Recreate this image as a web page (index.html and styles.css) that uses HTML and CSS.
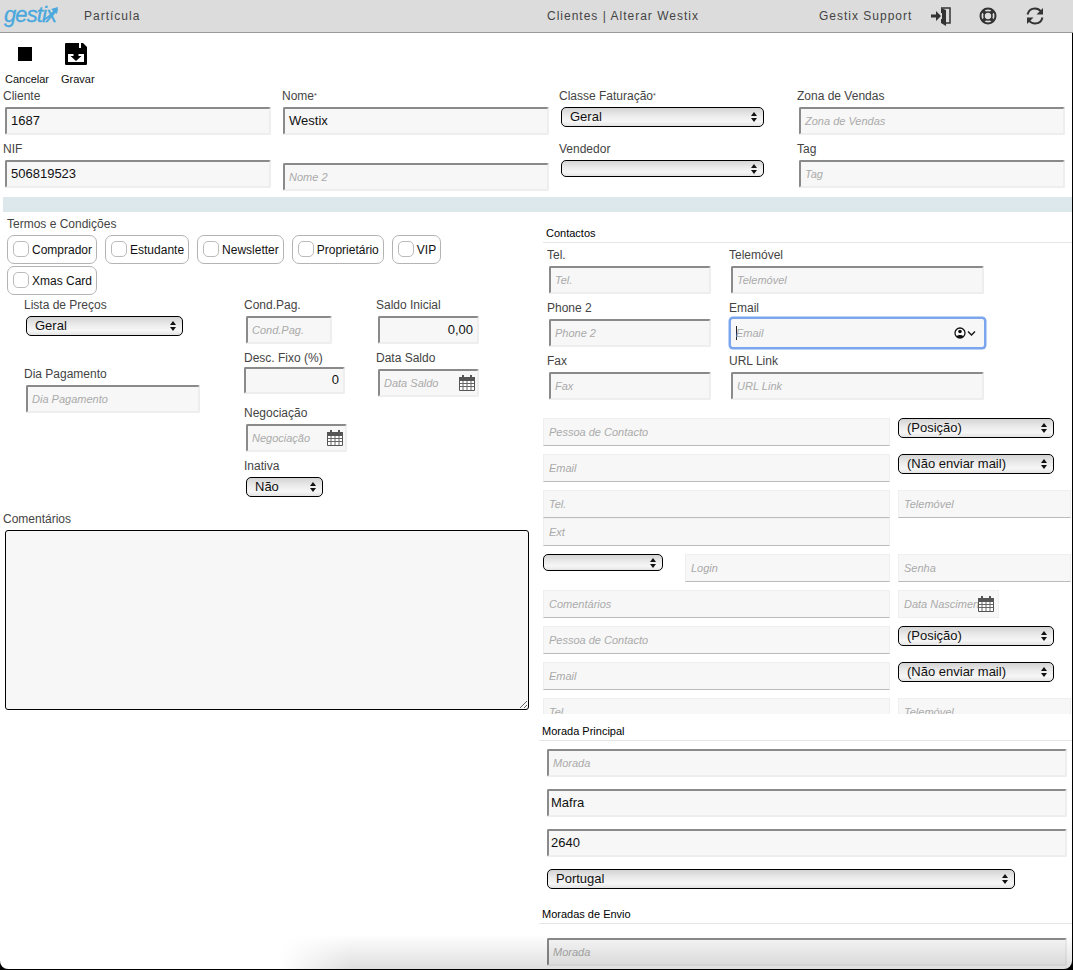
FILE: index.html
```html
<!DOCTYPE html>
<html lang="pt">
<head>
    <meta charset="UTF-8">
    <meta name="viewport" content="width=device-width, initial-scale=1.0">
    <link rel="stylesheet" href="styles.css">
    <title>Clientes | Alterar Westix</title>
</head>
<body>
    <svg class="defs" width="0" height="0">
        <symbol id="cal" viewBox="0 0 16 16">
            <path fill="#555" d="M0 2h16v4H0zM3 0h2v3H3zM11 0h2v3h-2z"/>
            <path fill="#fff" stroke="#555" d="M.5 5.5h15v10H.5z"/>
            <path stroke="#666" stroke-width="1" fill="none" d="M4 6v9M8 6v9M12 6v9M1 8.5h14M1 11.5h14"/>
        </symbol>
    </svg>

    <header class="topbar">
        <div class="brand">
            <span class="logo">gestix</span>
            <svg class="logo-arrow" width="20" height="16" viewBox="0 0 20 16">
                <path fill="none" stroke="#4aa8dc" stroke-width="2" d="M3 14C8 12 12 8 16 3"/>
                <path fill="#4aa8dc" d="M11 3l7-2-1 7z"/>
            </svg>
        </div>
        <div class="top-module">Partícula</div>
        <div class="top-crumb">Clientes | Alterar Westix</div>
        <div class="top-support">Gestix Support</div>
        <svg class="top-icon" width="20" height="20" viewBox="0 0 20 20">
            <path fill="#333" d="M0 8.500h5V5l5 5-5 5v-3.500H0z"/>
            <path fill="none" stroke="#333" stroke-width="1.500" d="M10 2h9v15h-5"/>
            <path fill="#333" d="M10 2l5 2v16l-5-3v-4h1V7h-1z"/>
        </svg>
        <svg class="top-icon buoy" width="20" height="20" viewBox="0 0 20 20">
            <circle cx="10" cy="10" r="7.500" fill="none" stroke="#333" stroke-width="2"/>
            <circle cx="10" cy="10" r="4" fill="none" stroke="#333" stroke-width="1.600"/>
            <path stroke="#333" stroke-width="3.200" d="M4.500 4.500l3 3M15.500 4.500l-3 3M4.500 15.500l3-3M15.500 15.500l-3-3"/>
        </svg>
        <svg class="top-icon sync" width="20" height="20" viewBox="0 0 20 20">
            <path fill="none" stroke="#333" stroke-width="2" d="M2.500 8.500C3.500 4.500 6.500 2.500 10 2.500c2.500 0 4.500 1 6 3"/>
            <path fill="#333" d="M18 2v6.500h-6.500z"/>
            <path fill="none" stroke="#333" stroke-width="2" d="M17.500 11.500c-1 4-4 6-7.500 6-2.500 0-4.500-1-6-3"/>
            <path fill="#333" d="M2 18v-6.500h6.500z"/>
        </svg>
    </header>

    <div class="toolbar">
        <div class="tool">
            <div class="tool-icon"><span class="stop"></span></div>
            <span class="tool-label">Cancelar</span>
        </div>
        <div class="tool">
            <div class="tool-icon save">
                <svg width="22" height="22" viewBox="0 0 22 22">
                    <path fill="#000" d="M0 1a1 1 0 0 1 1-1h13v5h2V0h2l4 4v17a1 1 0 0 1-1 1H1a1 1 0 0 1-1-1z"/>
                    <path fill="#fff" d="M3 11h16v8H3z"/>
                    <path fill="#000" d="M8.500 9h5v4h3L11 18l-5.500-5h3z"/>
                </svg>
            </div>
            <span class="tool-label">Gravar</span>
        </div>
    </div>

    <div class="top-form">
        <div>
            <div class="lbl">Cliente</div>
            <div class="field w-main ml2">1687</div>
        </div>
        <div>
            <div class="lbl">Nome<sup class="req">*</sup></div>
            <div class="field w-main ml1">Westix</div>
        </div>
        <div>
            <div class="lbl">Classe Faturação<sup class="req">*</sup></div>
            <div class="sel w-classe ml2"><span>Geral</span><i class="arrows"></i></div>
        </div>
        <div>
            <div class="lbl">Zona de Vendas</div>
            <div class="field ph w-main ml2">Zona de Vendas</div>
        </div>
        <div>
            <div class="lbl">NIF</div>
            <div class="field w-main ml2">506819523</div>
        </div>
        <div>
            <div class="lbl-blank"></div>
            <div class="field ph w-main ml1">Nome 2</div>
        </div>
        <div>
            <div class="lbl">Vendedor</div>
            <div class="sel empty w-classe ml2"><span></span><i class="arrows"></i></div>
        </div>
        <div>
            <div class="lbl">Tag</div>
            <div class="field ph w-main ml2">Tag</div>
        </div>
    </div>

    <div class="band"></div>

    <main class="cols">
        <section class="left">
            <div class="lbl terms-lbl">Termos e Condições</div>
            <div class="chips">
                <label class="chip"><span class="check"></span>Comprador</label>
                <label class="chip"><span class="check"></span>Estudante</label>
                <label class="chip"><span class="check"></span>Newsletter</label>
                <label class="chip"><span class="check"></span>Proprietário</label>
                <label class="chip"><span class="check"></span>VIP</label>
                <label class="chip"><span class="check"></span>Xmas Card</label>
            </div>

            <div class="sub">
                <div class="sub-a">
                    <div class="lbl">Lista de Preços</div>
                    <div class="sel w-lista ml2"><span>Geral</span><i class="arrows"></i></div>
                    <div class="lbl mt-dia">Dia Pagamento</div>
                    <div class="field ph w-dia ml2">Dia Pagamento</div>
                </div>
                <div class="sub-b">
                    <div class="lbl">Cond.Pag.</div>
                    <div class="field ph w-cond ml2">Cond.Pag.</div>
                    <div class="lbl mt7">Desc. Fixo (%)</div>
                    <div class="field num desc w-101">0</div>
                    <div class="lbl mt-neg">Negociação</div>
                    <div class="field ph date w-101 ml2"><span>Negociação</span><svg width="16" height="16"><use href="#cal"/></svg></div>
                    <div class="lbl mt7">Inativa</div>
                    <div class="sel w-inativa ml2"><span>Não</span><i class="arrows"></i></div>
                </div>
                <div class="sub-c">
                    <div class="lbl">Saldo Inicial</div>
                    <div class="field num w-101 ml2">0,00</div>
                    <div class="lbl mt7">Data Saldo</div>
                    <div class="field ph date w-101 ml2"><span>Data Saldo</span><svg width="16" height="16"><use href="#cal"/></svg></div>
                </div>
            </div>

            <div class="lbl comments-lbl">Comentários</div>
            <textarea class="comments"></textarea>
        </section>

        <section class="right">
            <div class="contacts-scroll">
                <div class="sec-title">Contactos</div>
                <div class="sec-line first"></div>
                <div class="phones">
                    <div>
                        <div class="lbl">Tel.</div>
                        <div class="field ph w-tel ml2">Tel.</div>
                    </div>
                    <div>
                        <div class="lbl">Telemóvel</div>
                        <div class="field ph w-mob ml2">Telemóvel</div>
                    </div>
                    <div>
                        <div class="lbl">Phone 2</div>
                        <div class="field ph w-tel ml2">Phone 2</div>
                    </div>
                    <div>
                        <div class="lbl">Email</div>
                        <div class="field ph focus w-mob ml2">
                            <i class="caret"></i><span class="grow">Email</span>
                            <svg width="22" height="12" viewBox="0 0 22 12">
                                <circle cx="6" cy="6" r="5" fill="#fff" stroke="#111" stroke-width="1.300"/>
                                <circle cx="6" cy="4.500" r="1.800" fill="#111"/>
                                <path fill="#111" d="M2.500 9.500c1-2 6-2 7 0l-2 1.500h-3z"/>
                                <path fill="none" stroke="#111" stroke-width="1.300" d="M14 4.500l3.500 3.500 3.500-3.500"/>
                            </svg>
                        </div>
                    </div>
                    <div>
                        <div class="lbl">Fax</div>
                        <div class="field ph w-tel ml2">Fax</div>
                    </div>
                    <div>
                        <div class="lbl">URL Link</div>
                        <div class="field ph w-mob ml2">URL Link</div>
                    </div>
                </div>

                <div class="people">
                    <div class="p-row">
                        <div class="pf w-pa">Pessoa de Contacto</div>
                        <div class="sel w-ps"><span>(Posição)</span><i class="arrows"></i></div>
                    </div>
                    <div class="p-row">
                        <div class="pf w-pa">Email</div>
                        <div class="sel w-ps"><span>(Não enviar mail)</span><i class="arrows"></i></div>
                    </div>
                    <div class="p-row tight">
                        <div class="pf w-pa">Tel.</div>
                        <div class="pf w-pb">Telemóvel</div>
                    </div>
                    <div class="p-row">
                        <div class="pf w-pa">Ext</div>
                    </div>
                    <div class="p-row">
                        <div class="sel empty w-small"><span></span><i class="arrows"></i></div>
                        <div class="pf w-login">Login</div>
                        <div class="pf w-pb">Senha</div>
                    </div>
                    <div class="p-row">
                        <div class="pf w-pa">Comentários</div>
                        <div class="pf date w-101"><span>Data Nascimento</span><svg width="16" height="16"><use href="#cal"/></svg></div>
                    </div>
                    <div class="p-row">
                        <div class="pf w-pa">Pessoa de Contacto</div>
                        <div class="sel w-ps"><span>(Posição)</span><i class="arrows"></i></div>
                    </div>
                    <div class="p-row">
                        <div class="pf w-pa">Email</div>
                        <div class="sel w-ps"><span>(Não enviar mail)</span><i class="arrows"></i></div>
                    </div>
                    <div class="p-row">
                        <div class="pf w-pa">Tel.</div>
                        <div class="pf w-pb">Telemóvel</div>
                    </div>
                </div>
            </div>

            <div class="addr">
                <div class="sec-title small-left">Morada Principal</div>
                <div class="sec-line"></div>
                <div class="field ph w-addr addr-first">Morada</div>
                <div class="field w-addr mt12">Mafra</div>
                <div class="field w-addr mt12">2640</div>
                <div class="sel w-country mt12"><span>Portugal</span><i class="arrows"></i></div>
                <div class="sec-title small-left mt-send">Moradas de Envio</div>
                <div class="sec-line"></div>
                <div class="field ph w-addr addr-send">Morada</div>
            </div>
        </section>
    </main>

    <div class="fade"></div>
    <div class="frame"></div>
</body>
</html>
```

FILE: styles.css
```css
*{
    box-sizing: border-box;
    font-family: "Liberation Sans", Arial, sans-serif;
}
html, body{
    margin: 0;
    padding: 0;
    height: 970px;
    overflow: hidden;
    background-color: #fff;
}
.defs{
    display: block;
    height: 0;
}

/* Barra de cima */
.topbar{
    display: flex;
    align-items: center;
    height: 33px;
    background-color: #dcdcdc;
    border-bottom: 1px solid #999;
    color: #444;
    font-size: 12px;
    letter-spacing: 1px;
}
.brand{
    position: relative;
    width: 84px;
    padding-left: 4px;
}
.logo{
    display: block;
    margin-top: -3px;
    color: #4aa8dc;
    font-size: 22px;
    font-style: italic;
    letter-spacing: -0.9px;
    -webkit-text-stroke: 0.3px #4aa8dc;
}
.logo-arrow{
    position: absolute;
    left: 40px;
    top: 1px;
}
.top-module{
    width: 463px;
}
.top-crumb{
    width: 272px;
}
.top-support{
    width: 112px;
}
.top-icon{
    flex: none;
}
.buoy{
    margin-left: 27px;
}
.sync{
    margin-left: 27px;
}

/* Botoes */
.toolbar{
    display: flex;
    gap: 12px;
    height: 56px;
    padding-left: 5px;
}
.tool{
    display: flex;
    flex-direction: column;
    align-items: center;
}
.tool-icon{
    display: flex;
    align-items: center;
    justify-content: center;
    height: 24px;
    margin-top: 9px;
}
.save{
    margin-left: -3px;
}
.stop{
    display: block;
    width: 14px;
    height: 14px;
    margin-left: -4px;
    background-color: #000;
}
.tool-label{
    margin-top: 7px;
    color: #111;
    font-size: 11px;
    line-height: 13px;
}

/* Campos */
.lbl{
    color: #444;
    font-size: 12px;
    line-height: 14px;
    height: 14px;
}
.lbl-blank{
    height: 14px;
}
.req{
    font-size: 7px;
    line-height: 0;
    vertical-align: 2px;
}
.field{
    display: flex;
    align-items: center;
    height: 28px;
    margin-top: 4px;
    padding: 0 4px 2px;
    background-color: #f7f7f7;
    border: 2px solid #eee;
    border-top-color: #8a8a8a;
    border-left-color: #8a8a8a;
    border-radius: 2px;
    color: #111;
    font-size: 13px;
    white-space: nowrap;
    overflow: hidden;
}
.ph{
    color: #aaa;
    font-size: 11px;
    font-style: italic;
    padding-bottom: 0;
}
.num{
    justify-content: flex-end;
}
.date{
    justify-content: space-between;
    padding-right: 2px;
}
.date span{
    flex: 1;
    min-width: 0;
    overflow: hidden;
}
.date svg{
    flex: none;
}
.desc{
    height: 27px;
    margin-top: 2px;
}
.sel{
    display: flex;
    align-items: center;
    justify-content: space-between;
    height: 20px;
    margin-top: 4px;
    padding: 0 6px 2px 8px;
    background: linear-gradient(#d4d4d4, #ececec 45%, #f6f6f6 75%, #e4e4e4);
    border: 1.500px solid #000;
    border-radius: 5px;
    color: #111;
    font-size: 13px;
    white-space: nowrap;
}
.sel.empty{
    height: 17px;
}
.p-row .sel{
    margin-top: 0;
}
.arrows{
    display: flex;
    flex-direction: column;
    flex: none;
    gap: 2px;
    margin-top: 2px;
}
.arrows::before,
.arrows::after{
    content: "";
    width: 0;
    height: 0;
    border-left: 3.500px solid transparent;
    border-right: 3.500px solid transparent;
}
.arrows::before{
    border-bottom: 4px solid #111;
}
.arrows::after{
    border-top: 4px solid #111;
}
.ml1{
    margin-left: 1px;
}
.ml2{
    margin-left: 2px;
}
.mt7{
    margin-top: 7px;
}
.mt12{
    margin-top: 12px;
}
.w-main{
    width: 266px;
}
.w-classe{
    width: 203px;
}
.w-lista{
    width: 157px;
}
.w-dia{
    width: 174px;
}
.w-cond{
    width: 86px;
}
.w-101{
    width: 101px;
}
.w-inativa{
    width: 77px;
}
.w-tel{
    width: 162px;
}
.w-mob{
    width: 253px;
}
.w-pa{
    width: 347px;
}
.w-pb{
    width: 173px;
}
.w-ps{
    width: 156px;
}
.w-small{
    width: 120px;
}
.w-login{
    width: 205px;
    margin-left: 14px;
}
.w-addr{
    width: 520px;
}
.w-country{
    width: 468px;
}

/* Parte de cima do formulario */
.top-form{
    display: grid;
    grid-template-columns: 279px 277px 238px 1fr;
    row-gap: 7px;
    padding-left: 3px;
}
.top-form > div:nth-child(6) .field{
    margin: 7px 0 -3px 1px;
}
.band{
    height: 15px;
    margin: 9px 0 0 3px;
    background-color: #dde8ec;
}
.cols{
    display: flex;
}

/* Coluna esquerda */
.left{
    flex: none;
    width: 535px;
}
.terms-lbl{
    margin: 5px 0 4px 7px;
}
.chips{
    display: flex;
    flex-wrap: wrap;
    gap: 2px 8px;
    width: 445px;
    margin-left: 7px;
}
.chip{
    display: flex;
    align-items: center;
    height: 29px;
    padding: 0 4px 0 5px;
    border: 1px solid #b4b4b4;
    border-radius: 7px;
    color: #111;
    font-size: 12px;
}
.check{
    width: 16px;
    height: 16px;
    margin: -2px 3px 0 0;
    background-color: #fff;
    border: 1px solid #bbb;
    border-radius: 5px;
}
.sub{
    display: flex;
    margin-top: 3px;
    padding-left: 24px;
}
.sub-a{
    width: 220px;
}
.sub-b{
    width: 132px;
}
.mt-dia{
    margin-top: 31px;
}
.mt-neg{
    margin-top: 12px;
}
.comments-lbl{
    margin: 15px 0 0 3px;
}
.comments{
    display: block;
    width: 524px;
    height: 180px;
    margin: 4px 0 0 5px;
    padding: 4px;
    background-color: #f7f7f7;
    border: 1px solid #000;
    border-radius: 3px;
    outline: none;
}

/* Coluna direita */
.right{
    flex: 1;
    min-width: 0;
}
.contacts-scroll{
    height: 502px;
    padding-top: 14px;
    overflow: hidden;
}
.sec-title{
    margin-left: 11px;
    color: #000;
    font-size: 11px;
    line-height: 14px;
}
.small-left{
    margin-left: 7px;
}
.sec-line{
    height: 1px;
    margin: 2px 0 0 4px;
    background-color: #e6e6e6;
}
.sec-line.first{
    margin-left: 8px;
}
.phones{
    display: grid;
    grid-template-columns: 182px 1fr;
    row-gap: 7px;
    margin: 5px 0 0 12px;
}
.focus{
    padding: 0 6px 0 3px;
    border: 2px solid #f7f7f7;
    border-radius: 2px;
    box-shadow: 0 0 0 2.500px #7ba6ee;
    overflow: visible;
}
.caret{
    width: 1px;
    height: 14px;
    margin-right: -1px;
    background-color: #222;
}
.grow{
    flex: 1;
}
.people{
    margin: 18px 0 0 8px;
}
.p-row{
    display: flex;
    align-items: flex-start;
    gap: 8px;
    height: 28px;
    margin-bottom: 8px;
}
.p-row.tight{
    margin-bottom: 0;
}
.pf{
    display: flex;
    align-items: center;
    height: 28px;
    padding: 0 5px;
    background-color: #f7f7f7;
    border: 1px solid #efefef;
    border-bottom: 1px solid #bbb;
    color: #aaa;
    font-size: 11px;
    font-style: italic;
    white-space: nowrap;
    overflow: hidden;
}
.pf.date{
    padding-right: 4px;
    border-bottom-color: #efefef;
}
.pf.date span{
    margin-right: -6px;
}
.addr{
    padding: 10px 0 0 0;
}
.addr .field{
    margin-left: 12px;
    padding-left: 2px;
}
.addr .ph{
    padding-left: 4px;
}
.addr .sel{
    margin-left: 12px;
    margin-top: 12px;
}
.addr-first{
    margin-top: 8px;
}
.mt-send{
    margin-top: 18px;
}
.addr-send{
    margin-top: 14px;
}

/* Sombra e canto da janela por cima da pagina */
.fade{
    position: fixed;
    left: 280px;
    right: 0;
    bottom: 0;
    height: 36px;
    background: linear-gradient(rgba(0, 0, 0, 0), rgba(0, 0, 0, 0.13));
    -webkit-mask-image: linear-gradient(to right, transparent, #000 70px);
    mask-image: linear-gradient(to right, transparent, #000 70px);
    pointer-events: none;
}
.frame{
    position: fixed;
    left: 0;
    top: 33px;
    right: 1px;
    bottom: 1px;
    border-radius: 0 0 8px 8px;
    box-shadow: 0 0 0 10px #000;
    clip-path: inset(0 -10px -10px 0);
    pointer-events: none;
}
```
